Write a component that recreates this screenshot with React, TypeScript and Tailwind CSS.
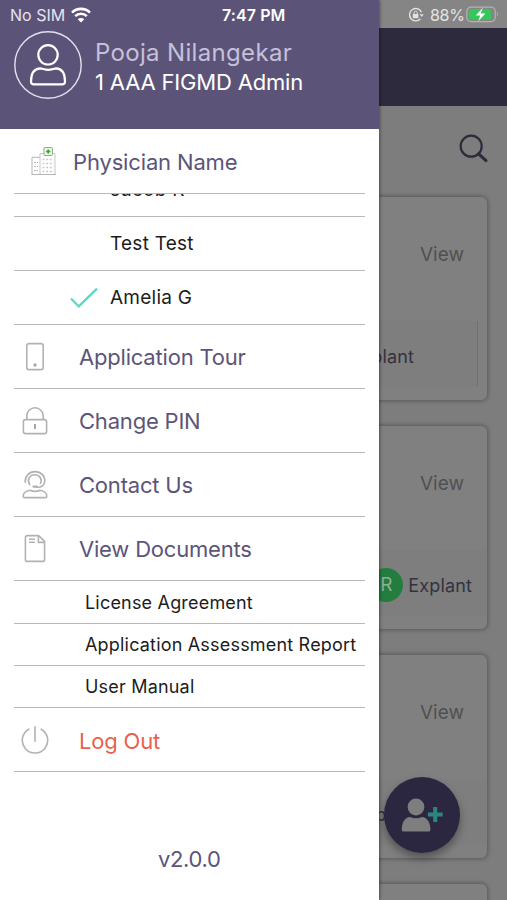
import type { ReactNode } from "react";

const physicians = [
  { name: "Jacob R", selected: false },
  { name: "Test Test", selected: false },
  { name: "Amelia G", selected: true },
];

const documents = [
  { name: "License Agreement", row: "h-[43px]" },
  { name: "Application Assessment Report", row: "h-[42px]" },
  { name: "User Manual", row: "h-[42px]" },
];

const cards = [
  { id: 1, badge: false, label: "Explant", labelClass: "mr-[63px]", divider: true },
  { id: 2, badge: true, label: "Explant", labelClass: "mr-[15px]", divider: false },
  { id: 3, badge: false, label: "Explant", labelClass: "mr-[69px]", divider: false },
  { id: 4, badge: false, label: "", labelClass: "", divider: false },
];

function PhoneIcon() {
  return (
    <svg width="28" height="30" viewBox="0 0 28 30" fill="none" stroke="#b2b2b2" strokeWidth="1.6">
      <rect x="5.8" y="1.6" width="16.4" height="26" rx="2.2" />
      <circle cx="14" cy="23" r="1.7" fill="#a8a8a8" stroke="none" />
    </svg>
  );
}

function LockIcon() {
  return (
    <svg width="28" height="30" viewBox="0 0 28 30" fill="none" stroke="#b2b2b2" strokeWidth="1.6">
      <rect x="2.4" y="13.6" width="23.2" height="14" rx="2.2" />
      <path d="M5.8 13.4V10a8.2 8.2 0 0 1 16.4 0v3.4" />
      <path d="M14 18v5" stroke="#a8a8a8" strokeWidth="2" />
    </svg>
  );
}

function ContactIcon() {
  return (
    <svg width="28" height="30" viewBox="0 0 28 30" fill="none" stroke="#b2b2b2" strokeWidth="1.6" strokeLinecap="round">
      <path d="M4.2 12.3C3.8 6 8.4 1.6 14 1.6c6 0 10 4.4 9.8 9.4-.2 4.4-3.6 6.8-8.6 6.2" />
      <path d="M8.8 14.6c-3-4.4-.6-9.7 4.8-9.9 5-.2 8 4.600 5.800 8.800" />
      <path d="M12.600 16.600h3" strokeWidth="2.4" />
      <path
        d="M3.600 27.600c-1 0-1.400-.5-1.400-1.400 0-4 2.400-5.200 6.800-6 3.400 1.600 6.600 1.600 10 0 4.400.8 6.800 2 6.800 6 0 .9-.4 1.400-1.400 1.400Z"
        strokeLinejoin="round"
      />
    </svg>
  );
}

function DocumentIcon() {
  return (
    <svg width="28" height="30" viewBox="0 0 28 30" fill="none" stroke="#b2b2b2" strokeWidth="1.6" strokeLinejoin="round">
      <path d="M6.4 1.600h11.200l6 5.800v18a2 2 0 0 1-2 2H6.400a2 2 0 0 1-2-2V3.600a2 2 0 0 1 2-2Z" />
      <path d="M17.400 1.800v6.600h6.200" />
      <path d="M8 5.200h6M8 8.200h6" />
    </svg>
  );
}

function PowerIcon() {
  return (
    <svg width="28" height="30" viewBox="0 0 28 30" fill="none" stroke="#b2b2b2" strokeWidth="1.6" strokeLinecap="round">
      <path d="M14 1.800v14.400" />
      <path d="M7.800 4.200a12.700 12.700 0 1 0 12.400 0" />
    </svg>
  );
}

function HospitalIcon() {
  return (
    <svg width="26" height="30" viewBox="0 0 26 30" fill="none" stroke="#b5b5b5">
      <path d="M1 28.500V11.300h8" />
      <path d="M9 28.500V7.500h15v21" stroke="#c8c8c8" />
      <path d="M0.500 28.500h24.500" />
      <path d="M3 16.500h4M3 20.500h4M3 24.500h4" strokeDasharray="2 1" />
      <path
        d="M11.500 13.500h11M11.500 17.500h11M11.500 21.500h11M11.500 25.500h11"
        stroke="#cbcbcb"
        strokeDasharray="2 1.6"
        strokeWidth="1.5"
      />
      <rect x="13" y="1.500" width="8.400" height="8" rx="0.8" fill="#e9f7e3" stroke="#8fa88a" />
      <path d="M17.200 3.400v4.200M15.100 5.500h4.200" stroke="#36a32b" strokeWidth="1.6" />
    </svg>
  );
}

function MenuRow({ icon, label, danger }: { icon: ReactNode; label: string; danger?: boolean }) {
  return (
    <div className="mx-3.5 flex h-16 shrink-0 items-center border-b border-[#b9b9b9] pl-[7px]">
      {icon}
      <span
        className={`ml-[30px] text-[22px] tracking-[-0.2px] ${danger ? "pt-[3px] text-[#e95f50]" : "pt-0.5 text-[#5c5479]"}`}
      >
        {label}
      </span>
    </div>
  );
}

function StatusBar() {
  return (
    <div className="absolute inset-x-0 top-0 z-20 flex h-[30px] items-center text-white">
      <span className="ml-2.5 w-[54px] text-[16px] whitespace-nowrap text-[#e6e3ee]">No SIM</span>
      <svg className="ml-[7px]" width="20" height="16" viewBox="0 0 20 16" fill="none" stroke="#fff" strokeWidth="2.6">
        <path d="M1 5.600a12.800 12.800 0 0 1 18 0" />
        <path d="M4.200 9.200a8.200 8.200 0 0 1 11.600 0" />
        <path d="M10 15.400 6.800 12.200a4.600 4.600 0 0 1 6.400 0Z" fill="#fff" stroke="none" />
      </svg>
      <span className="ml-[131px] w-16 text-[16px] font-semibold tracking-[0.1px] whitespace-nowrap">7:47 PM</span>
      <svg className="ml-[122px]" width="16" height="16" viewBox="0 0 16 16" fill="none" stroke="#e2e2e2" strokeWidth="1.4">
        <path d="M13.400 5.200A6.200 6.200 0 1 0 12.400 11.800" />
        <path d="M11.600 7.200h4l-1.800 2.800Z" fill="#e2e2e2" stroke="none" />
        <rect x="4.800" y="7" width="5.600" height="4.200" rx="0.6" fill="#e2e2e2" stroke="none" />
        <path d="M6 7V5.800a1.600 1.600 0 0 1 3.200 0V7" strokeWidth="1" />
      </svg>
      <span className="ml-[6px] w-[35px] text-[16px] tracking-[-0.3px] whitespace-nowrap text-[#e4e4e4]">88%</span>
      <svg className="ml-[1px]" width="34" height="18" viewBox="0 0 34 18">
        <rect x="0.8" y="1.2" width="28.4" height="14.400" rx="4.2" fill="none" stroke="#b4b4b4" strokeWidth="1.2" />
        <rect x="2.600" y="3" width="22.400" height="10.800" rx="2.6" fill="#35c759" />
        <path d="M30.800 6c1.700.5 1.700 4.300 0 4.800Z" fill="#a5a5a5" />
        <path d="M16.800 1.800 9.800 9.400h4.400l-2 5.800 7.200-7.800h-4.600Z" fill="#fff" />
      </svg>
    </div>
  );
}

function Drawer() {
  return (
    <aside className="absolute inset-y-0 left-0 z-10 flex w-[378.5px] flex-col bg-white shadow-[1px_0_3px_rgba(0,0,0,0.4)]">
      <header className="flex h-[129px] shrink-0 items-start bg-[#5c5478] pt-[31px] pl-3.5">
        <svg width="68" height="68" viewBox="0 0 68 68" fill="none" stroke="#fff">
          <circle cx="34" cy="34" r="33.200" stroke="#e4e1ee" strokeWidth="1.4" />
          <circle cx="34" cy="23.800" r="9.700" strokeWidth="2.2" />
          <path
            d="M20 53.400c-2.400 0-3-.8-3-3 0-7.400 2.600-12.600 9.400-13 2 0 4.200 1.400 7.800 1.400s5.800-1.400 7.800-1.400c6.800.4 9 5.600 9 13 0 2.200-.6 3-3 3Z"
            strokeWidth="2.2"
          />
        </svg>
        <div className="flex flex-col pt-[7px] pl-[13px]">
          <span className="text-[24px] leading-[30px] tracking-[0.33px] whitespace-nowrap text-[#c6c0d8]">
            Pooja Nilangekar
          </span>
          <span className="text-[22px] leading-[28px] tracking-[-0.17px] whitespace-nowrap text-white">
            1 AAA FIGMD Admin
          </span>
        </div>
      </header>

      <div className="mx-3.5 flex h-[65px] shrink-0 items-center border-b border-[#b9b9b9] pl-[17px]">
        <HospitalIcon />
        <span className="ml-4 pt-0.5 text-[22px] tracking-[-0.15px] text-[#5c5479]">Physician Name</span>
      </div>

      {/* Scrolled list of physicians */}
      <div className="mx-3.5 flex h-[131px] shrink-0 flex-col justify-end overflow-hidden">
        {physicians.map((p) => (
          <div key={p.name} className="flex h-[54px] shrink-0 items-center border-b border-[#b9b9b9] pl-14">
            <div className="w-10">
              {p.selected && (
                <svg width="28" height="22" viewBox="0 0 28 22" fill="none" stroke="#58d9c4" strokeWidth="2.2">
                  <path d="M1 11.400 8.800 19.400 27 1.600" />
                </svg>
              )}
            </div>
            <span className="pt-0.5 text-[19px] tracking-[0.25px] text-[#1c1c1c]">{p.name}</span>
          </div>
        ))}
      </div>

      <MenuRow icon={<PhoneIcon />} label="Application Tour" />
      <MenuRow icon={<LockIcon />} label="Change PIN" />
      <MenuRow icon={<ContactIcon />} label="Contact Us" />
      <MenuRow icon={<DocumentIcon />} label="View Documents" />

      {documents.map((d) => (
        <div key={d.name} className={`mx-3.5 flex shrink-0 items-center border-b border-[#b9b9b9] pl-[71px] ${d.row}`}>
          <span className="text-[18px] tracking-[0.19px] whitespace-nowrap text-[#1c1c1c]">{d.name}</span>
        </div>
      ))}

      <MenuRow icon={<PowerIcon />} label="Log Out" danger />

      <p className="pt-[72px] text-center text-[22px] leading-[30px] tracking-[-0.3px] text-[#5c5479]">v2.0.0</p>
    </aside>
  );
}

export default function App() {
  return (
    <div className="relative flex h-[900px] w-[507px] flex-col overflow-hidden bg-[#7d7d7d] font-['Inter','Liberation_Sans',sans-serif]">
      <StatusBar />
      <Drawer />

      <div className="h-7 shrink-0 bg-[#858585]" />
      <div className="h-[78px] shrink-0 bg-[#2c2a3c]" />
      <div className="flex h-[91px] shrink-0 justify-end pt-[28px] pr-[18px]">
        <svg width="30" height="30" viewBox="0 0 30 30" fill="none" stroke="#2c2a3c" strokeWidth="2.2">
          <circle cx="12.200" cy="12.200" r="10.500" />
          <path d="m19.600 19.800 7.400 6.800" strokeWidth="3" strokeLinecap="round" />
        </svg>
      </div>

      <div className="flex flex-col gap-[26px] px-5">
        {cards.map((card) => (
          <div
            key={card.id}
            className="flex h-[203px] shrink-0 flex-col rounded-md bg-[#808080] shadow-[0_0_4px_1px_rgba(0,0,0,0.3)]"
          >
            <span className="self-end pt-[44px] pr-[23px] text-[19px] leading-[28px] text-[#505050]">View</span>
            <div
              className={`mt-[52px] mb-3 flex h-[66px] items-center justify-end bg-[#7e7e7e] pt-1 ${
                card.divider ? "mr-[9px] border-r border-[#707070]" : ""
              }`}
            >
              {card.badge && (
                <span className="mr-[5px] flex size-[34px] items-center justify-center rounded-full bg-[#237d3f] text-[19px] text-[#8fae97]">
                  R
                </span>
              )}
              {card.label && (
                <span className={`text-[18px] tracking-[0.15px] text-[#34323f] ${card.labelClass}`}>{card.label}</span>
              )}
            </div>
          </div>
        ))}
      </div>

      <button
        aria-label="Add patient"
        className="absolute top-[777px] left-[384px] flex size-[76px] items-center justify-center rounded-full bg-[#2c2740] shadow-[0_5px_8px_rgba(0,0,0,0.35)]"
      >
        <svg width="44" height="36" viewBox="0 0 44 36" fill="#7e7e7e">
          <circle cx="16" cy="10" r="8.400" />
          <path d="M3.600 34.500c-1.200 0-1.800-.6-1.800-1.800C1.800 25 5 20.500 10 20c4 1.600 8 1.600 12 0 5 .5 8.400 5 8.400 12.700 0 1.200-.6 1.800-1.800 1.800Z" />
          <path d="M35.200 10v15M27.900 17.500h14.800" stroke="#2b8583" strokeWidth="4" />
        </svg>
      </button>
    </div>
  );
}
